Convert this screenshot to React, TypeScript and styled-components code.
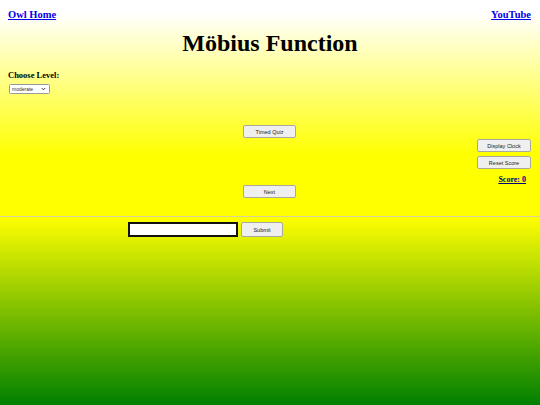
import { useState } from "react";
import styled, { createGlobalStyle } from "styled-components";

const GlobalStyle = createGlobalStyle`
  html, body {
    margin: 0;
    padding: 0;
    height: 100%;
  }
  body {
    font-family: "Liberation Serif", "Times New Roman", serif;
    background: #008000;
  }
  #root {
    min-height: 100%;
  }
`;

// ================================================
//              Components
// ================================================
const Page = styled.div`
  width: 540px;
  height: 405px;
  display: flex;
  flex-direction: column;
  overflow: hidden;
`;
const Top = styled.div`
  height: 216px;
  background: linear-gradient(to bottom, #ffffff 6%, #ffff00 72%);
  display: flex;
  flex-direction: column;
`;
const Header = styled.div`
  display: flex;
  justify-content: space-between;
  padding: 9px 9px 0 8px;
`;
const NavLink = styled.a`
  font-size: 10.5px;
  font-weight: bold;
  color: #0000ee;
  text-decoration: underline;
  line-height: 12px;
`;
const Title = styled.h1`
  margin: 8px 0 0;
  text-align: center;
  font-size: 24px;
  line-height: 28px;
  font-weight: bold;
  color: #000;
`;
const Level = styled.div`
  padding: 0 8px;
  margin-top: 13px;
  display: flex;
  flex-direction: column;
  align-items: flex-start;
  gap: 4px;
`;
const LevelLabel = styled.label`
  font-size: 8.5px;
  font-weight: bold;
  line-height: 10px;
`;
const SelectWrap = styled.div`
  position: relative;
  margin-left: 1px;
  width: 41px;
  height: 10px;
`;
const Select = styled.select`
  appearance: none;
  display: block;
  box-sizing: border-box;
  width: 100%;
  height: 100%;
  margin: 0;
  padding: 0 0 0 2px;
  font-family: "Liberation Sans", Arial, sans-serif;
  font-size: 5px;
  line-height: 8px;
  color: #333;
  border: 1px solid #9a9a9a;
  border-radius: 1.5px;
  background: #fff;
`;
const Chevron = styled.svg`
  position: absolute;
  right: 4px;
  top: 3px;
  width: 5px;
  height: 4px;
  pointer-events: none;
`;
const Controls = styled.div`
  display: grid;
  grid-template-columns: 1fr auto 1fr;
  padding: 0 9px 0 8px;
  margin-top: 31px;
`;
const Center = styled.div`
  grid-column: 2;
  display: flex;
  flex-direction: column;
  gap: 47px;
`;
const Side = styled.div`
  grid-column: 3;
  justify-self: end;
  margin-top: 14px;
  display: flex;
  flex-direction: column;
  align-items: stretch;
  gap: 4px;
`;
const Button = styled.button<{ w: number; h?: number }>`
  width: ${(p) => p.w}px;
  height: ${(p) => p.h ?? 13}px;
  padding: 0;
  font-family: "Liberation Sans", Arial, sans-serif;
  font-size: 5.5px;
  color: #222;
  background: #efefef;
  border: 1px solid #a8a8a0;
  border-radius: 2px;
`;
const Score = styled.a`
  margin-top: 2px;
  padding-right: 5px;
  text-align: right;
  font-size: 8px;
  font-weight: bold;
  color: #00007a;
  text-decoration: underline;
`;
const Rule = styled.hr`
  margin: 0;
  border: none;
  height: 1px;
  background: #d6d29a;
`;
const Bottom = styled.div`
  flex: 1;
  background: linear-gradient(to bottom, #ffff00 0%, #008000 100%);
  padding: 5px 0 0 128px;
  display: flex;
  align-items: flex-start;
  gap: 3px;
`;
const Answer = styled.input`
  width: 110px;
  height: 15px;
  box-sizing: border-box;
  border: 2px solid #111;
  background: #fff;
  padding: 0 2px;
`;

// ================================================
//                App
// ================================================
const App = () => {
  const [level, setLevel] = useState("moderate");
  const [score, setScore] = useState(0);
  const [answer, setAnswer] = useState("");

  return (
    <>
      <GlobalStyle />
      <Page>
        <Top>
          <Header>
            <NavLink href="#">Owl Home</NavLink>
            <NavLink href="#">YouTube</NavLink>
          </Header>
          <Title>Möbius Function</Title>
          <Level>
            <LevelLabel>Choose Level:</LevelLabel>
            <SelectWrap>
              <Select value={level} onChange={(e) => setLevel(e.target.value)}>
                <option value="easy">easy</option>
                <option value="moderate">moderate</option>
                <option value="hard">hard</option>
              </Select>
              <Chevron viewBox="0 0 10 8">
                <path d="M1.5 2 L5 5.5 L8.5 2" fill="none" stroke="#222" strokeWidth="1.8" />
              </Chevron>
            </SelectWrap>
          </Level>
          <Controls>
            <Center>
              <Button w={53}>Timed Quiz</Button>
              <Button w={53}>Next</Button>
            </Center>
            <Side>
              <Button w={54}>Display Clock</Button>
              <Button w={54} onClick={() => setScore(0)}>
                Reset Score
              </Button>
              <Score href="#">Score: {score}</Score>
            </Side>
          </Controls>
        </Top>
        <Rule />
        <Bottom>
          <Answer value={answer} onChange={(e) => setAnswer(e.target.value)} />
          <Button w={42} h={15}>
            Submit
          </Button>
        </Bottom>
      </Page>
    </>
  );
};

export default App;
